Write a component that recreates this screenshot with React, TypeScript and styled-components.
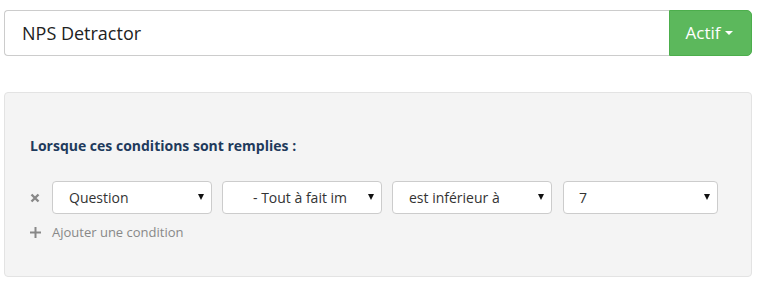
import { ReactElement } from 'react'
import styled, { createGlobalStyle } from 'styled-components'

const GlobalStyle = createGlobalStyle`
  body {
    margin: 0;
    background: #fff;
    font-family: "Open Sans", "Liberation Sans", sans-serif;
  }
`

const Page = styled.div`
  width: 748px;
  padding: 10px 8px 0 4px;
`

const NameBar = styled.div`
  display: flex;
  height: 46px;
`

const NameInput = styled.div`
  flex: 1;
  display: flex;
  align-items: center;
  border: 1px solid #ccc;
  border-right: none;
  border-radius: 4px 0 0 4px;
  padding-left: 17px;
  font-size: 18px;
  color: #222;
`

const StatusButton = styled.div`
  width: 83px;
  display: flex;
  align-items: center;
  justify-content: center;
  gap: 5px;
  background: #5cb85c;
  border: 1px solid #4cae4c;
  border-radius: 0 5px 5px 0;
  box-sizing: border-box;
  color: #fff;
  font-size: 17px;
  padding: 0 2px 1px 0;
`

const Caret = styled.span<{ $color: string; $size: number; $height: number }>`
  display: inline-block;
  width: 0;
  height: 0;
  border-left: ${p => p.$size}px solid transparent;
  border-right: ${p => p.$size}px solid transparent;
  border-top: ${p => p.$height}px solid ${p => p.$color};
`

const Panel = styled.div`
  margin-top: 36px;
  height: 185px;
  box-sizing: border-box;
  background: #f4f4f4;
  border: 1px solid #e3e3e3;
  border-radius: 4px;
  padding: 43px 0 0 25px;
`

const Heading = styled.div`
  font-size: 14px;
  font-weight: 700;
  color: #1e3a5c;
  line-height: 19px;
`

const ConditionRow = styled.div`
  display: flex;
  align-items: center;
  margin-top: 26px;
`

const IconSlot = styled.div`
  width: 22px;
  display: flex;
  align-items: center;
  color: #888;
`

const Selects = styled.div`
  display: flex;
  gap: 10px;
`

const SelectBox = styled.div<{ $width: number; $indent: number; $gap: number }>`
  width: ${p => p.$width}px;
  margin-left: ${p => p.$gap}px;
  height: 33px;
  box-sizing: border-box;
  display: flex;
  align-items: center;
  justify-content: space-between;
  background: #fff;
  border: 1px solid #ccc;
  border-radius: 4px;
  padding: 0 7px 1px ${p => p.$indent}px;
  font-size: 14px;
  color: #333;
  white-space: nowrap;
  overflow: hidden;
`

const AddLine = styled.div`
  display: flex;
  align-items: center;
  margin-top: 8px;
  font-size: 13px;
  color: #888;
  line-height: 20px;
`

const conditions = [
  { label: 'Question', width: 160, indent: 16, gap: 0 },
  { label: '- Tout à fait im', width: 160, indent: 30, gap: 0 },
  { label: 'est inférieur à', width: 160, indent: 16, gap: 0 },
  { label: '7', width: 155, indent: 15, gap: 1 },
]

export default function App(): ReactElement {
  return (
    <>
      <GlobalStyle />
      <Page>
        <NameBar>
          <NameInput>NPS Detractor</NameInput>
          <StatusButton>
            Actif <Caret $color="#fff" $size={4} $height={4} />
          </StatusButton>
        </NameBar>

        <Panel>
          <Heading>Lorsque ces conditions sont remplies :</Heading>

          <ConditionRow>
            <IconSlot>
              <svg width="10" height="10" viewBox="0 0 10 10">
                <path d="M1.5 1.5 L8.5 8.5 M8.5 1.5 L1.5 8.5" stroke="#888" strokeWidth="2.4" />
              </svg>
            </IconSlot>
            <Selects>
              {conditions.map(c => (
                <SelectBox key={c.label} $width={c.width} $indent={c.indent} $gap={c.gap}>
                  <span>{c.label}</span>
                  <Caret $color="#111" $size={3.5} $height={6} />
                </SelectBox>
              ))}
            </Selects>
          </ConditionRow>

          <AddLine>
            <IconSlot>
              <svg width="11" height="11" viewBox="0 0 11 11">
                <path d="M5.5 0 V11 M0 5.5 H11" stroke="#888" strokeWidth="2" />
              </svg>
            </IconSlot>
            Ajouter une condition
          </AddLine>
        </Panel>
      </Page>
    </>
  )
}
